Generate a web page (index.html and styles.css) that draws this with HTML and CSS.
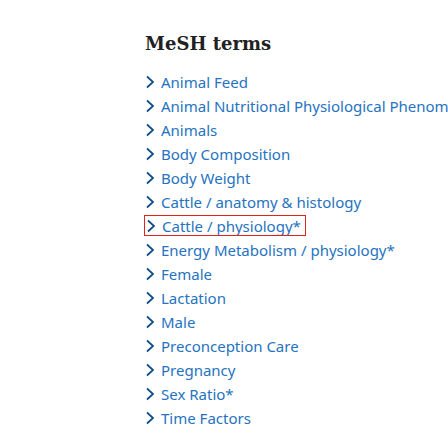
FILE: index.html
```html
<!DOCTYPE html>
<html>
<head>
<meta charset="utf-8">
<link rel="stylesheet" href="styles.css">
</head>
<body>
<section class="mesh">
  <h2 class="title">MeSH terms</h2>
  <ul class="terms">
    <li class="term"><svg class="chev" viewBox="0 0 10 14"><polyline points="2,1.5 8,7 2,12.5"/></svg><span class="label">Animal Feed</span></li>
    <li class="term"><svg class="chev" viewBox="0 0 10 14"><polyline points="2,1.5 8,7 2,12.5"/></svg><span class="label">Animal Nutritional Physiological Phenomena</span></li>
    <li class="term"><svg class="chev" viewBox="0 0 10 14"><polyline points="2,1.5 8,7 2,12.5"/></svg><span class="label">Animals</span></li>
    <li class="term"><svg class="chev" viewBox="0 0 10 14"><polyline points="2,1.5 8,7 2,12.5"/></svg><span class="label">Body Composition</span></li>
    <li class="term"><svg class="chev" viewBox="0 0 10 14"><polyline points="2,1.5 8,7 2,12.5"/></svg><span class="label">Body Weight</span></li>
    <li class="term"><svg class="chev" viewBox="0 0 10 14"><polyline points="2,1.5 8,7 2,12.5"/></svg><span class="label">Cattle / anatomy &amp; histology</span></li>
    <li class="term active"><svg class="chev" viewBox="0 0 10 14"><polyline points="2,1.5 8,7 2,12.5"/></svg><span class="label">Cattle / physiology*</span></li>
    <li class="term"><svg class="chev" viewBox="0 0 10 14"><polyline points="2,1.5 8,7 2,12.5"/></svg><span class="label">Energy Metabolism / physiology*</span></li>
    <li class="term"><svg class="chev" viewBox="0 0 10 14"><polyline points="2,1.5 8,7 2,12.5"/></svg><span class="label">Female</span></li>
    <li class="term"><svg class="chev" viewBox="0 0 10 14"><polyline points="2,1.5 8,7 2,12.5"/></svg><span class="label">Lactation</span></li>
    <li class="term"><svg class="chev" viewBox="0 0 10 14"><polyline points="2,1.5 8,7 2,12.5"/></svg><span class="label">Male</span></li>
    <li class="term"><svg class="chev" viewBox="0 0 10 14"><polyline points="2,1.5 8,7 2,12.5"/></svg><span class="label">Preconception Care</span></li>
    <li class="term"><svg class="chev" viewBox="0 0 10 14"><polyline points="2,1.5 8,7 2,12.5"/></svg><span class="label">Pregnancy</span></li>
    <li class="term"><svg class="chev" viewBox="0 0 10 14"><polyline points="2,1.5 8,7 2,12.5"/></svg><span class="label">Sex Ratio*</span></li>
    <li class="term"><svg class="chev" viewBox="0 0 10 14"><polyline points="2,1.5 8,7 2,12.5"/></svg><span class="label">Time Factors</span></li>
  </ul>
</section>
</body>
</html>
```
FILE: styles.css
```css
html, body {
  margin: 0;
  padding: 0;
  background: #fff;
  overflow: hidden;
}
.mesh {
  width: 448px;
  box-sizing: border-box;
  padding: 30px 0 0 145px;
  white-space: nowrap;
  overflow: hidden;
}
.title {
  margin: 0 0 12px 0;
  font-family: "DejaVu Serif", serif;
  font-weight: bold;
  font-size: 18px;
  line-height: 28px;
  color: #212121;
}
.terms {
  list-style: none;
  margin: 0;
  padding: 0;
}
.term {
  display: flex;
  align-items: center;
  height: 24px;
  overflow: hidden;
  font-family: "Noto Sans", sans-serif;
  font-size: 15px;
  color: #2573c0;
}
.term.active {
  width: 162px;
  height: 21px;
  margin: 1px 0 2px -1px;
  padding-left: 1px;
  border: 1px solid #e0231c;
  box-sizing: border-box;
}
.chev {
  flex: 0 0 auto;
  width: 10px;
  height: 14px;
  margin-right: 6px;
  fill: none;
  stroke: #0b4a8a;
  stroke-width: 1.7;
}
.label {
  line-height: 24px;
}
```
